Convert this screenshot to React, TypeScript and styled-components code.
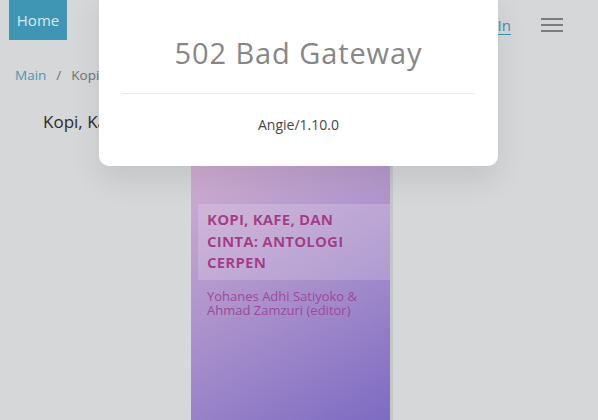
import React from "react";
import styled, { createGlobalStyle } from "styled-components";

const Global = createGlobalStyle`
  html, body { margin: 0; padding: 0; }
  body {
    background: #d5d7d8;
    font-family: "Open Sans", "Liberation Sans", sans-serif;
    width: 598px;
    height: 420px;
    overflow: hidden;
  }
`;

const Page = styled.div`
  position: relative;
  width: 598px;
  height: 420px;
  overflow: hidden;
  background: #d5d7d8;
`;

const Header = styled.header`
  display: flex;
  align-items: flex-start;
  justify-content: space-between;
  height: 40px;
  padding: 0 35px 0 9px;
`;

const HomeButton = styled.a`
  display: flex;
  align-items: center;
  justify-content: center;
  width: 58px;
  height: 40px;
  background: #3e96b4;
  color: #dde9ee;
  font-size: 15px;
  text-decoration: none;
`;

const RightNav = styled.div`
  display: flex;
  align-items: center;
  gap: 30px;
  height: 50px;
`;

const LoginLink = styled.a`
  color: #3e93b0;
  font-size: 15px;
  text-decoration: underline;
  text-underline-offset: 3px;
`;

const Burger = styled.div`
  display: flex;
  flex-direction: column;
  gap: 3.5px;
  width: 22px;
  span {
    display: block;
    height: 2.5px;
    background: #7b7c7d;
  }
`;

const Crumbs = styled.nav`
  display: flex;
  gap: 10px;
  padding: 26px 15px 0;
  font-size: 13.5px;
  line-height: 18px;
`;

const Crumb = styled.span<{ $active?: boolean }>`
  color: ${(p) => (p.$active ? "#4a98b4" : "#707172")};
`;

const Title = styled.h1`
  margin: 26px 0 0 43px;
  font-size: 17px;
  font-weight: 400;
  line-height: 24px;
  color: #2f2b27;
`;

const CoverRow = styled.div`
  display: flex;
  padding: 23px 0 0 191px;
`;

const Cover = styled.div`
  width: 199px;
  height: 300px;
  border-right: 3px solid #c4c6c8;
  background: linear-gradient(150deg, #d2b0d2 0%, #a58dcb 45%, #6a5abf 100%);
  padding-top: 47px;
  box-sizing: content-box;
`;

const TitleBand = styled.div`
  margin-left: 7px;
  padding: 5px 9px 6px 9px;
  background: rgba(255, 255, 255, 0.17);
`;

const CoverTitle = styled.div`
  font-family: "Open Sans", sans-serif;
  font-weight: 700;
  font-size: 15px;
  line-height: 21.5px;
  color: #a23c89;
  letter-spacing: 0.2px;
  text-shadow: 0 0 1px rgba(255, 255, 255, 0.4);
`;

const CoverAuthor = styled.div`
  margin: 9px 0 0 16px;
  font-size: 13px;
  line-height: 14px;
  color: #a1469b;
`;

const Modal = styled.div`
  position: absolute;
  left: 99px;
  top: -10px;
  width: 399px;
  height: 176px;
  box-sizing: border-box;
  background: #fff;
  border-radius: 10px;
  box-shadow: 0 14px 30px rgba(0, 0, 0, 0.09);
  padding: 10px 23px 0;
  display: flex;
  flex-direction: column;
  align-items: stretch;
`;

const ModalTitle = styled.h2`
  margin: 33px 0 0;
  text-align: center;
  font-size: 29px;
  font-weight: 400;
  line-height: 40px;
  color: #878787;
  letter-spacing: 0.9px;
`;

const Divider = styled.hr`
  margin: 20px 0 0;
  border: 0;
  border-top: 1px solid #ebebeb;
`;

const ModalText = styled.p`
  margin: 21px 0 0;
  text-align: center;
  font-size: 14px;
  line-height: 20px;
  color: #474747;
`;

export default function App() {
  return (
    <>
      <Global />
      <Page>
        <Header>
          <HomeButton>Home</HomeButton>
          <RightNav>
            <LoginLink>Log In</LoginLink>
            <Burger>
              <span />
              <span />
              <span />
            </Burger>
          </RightNav>
        </Header>
        <Crumbs>
          <Crumb $active>Main</Crumb>
          <Crumb>/</Crumb>
          <Crumb>Kopi, Kafe, dan Cinta</Crumb>
        </Crumbs>
        <Title>Kopi, Kafe, dan Cinta: Antologi Cerpen</Title>
        <CoverRow>
          <Cover>
            <TitleBand>
              <CoverTitle>KOPI, KAFE, DAN CINTA: ANTOLOGI CERPEN</CoverTitle>
            </TitleBand>
            <CoverAuthor>
              Yohanes Adhi Satiyoko &amp;
              <br />
              Ahmad Zamzuri (editor)
            </CoverAuthor>
          </Cover>
        </CoverRow>
        <Modal>
          <ModalTitle>502 Bad Gateway</ModalTitle>
          <Divider />
          <ModalText>Angie/1.10.0</ModalText>
        </Modal>
      </Page>
    </>
  );
}
